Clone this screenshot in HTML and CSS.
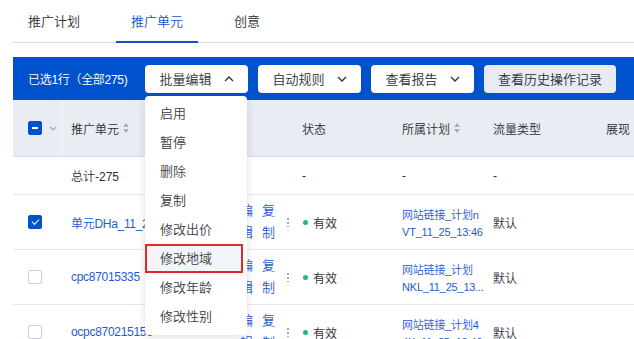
FILE: index.html
```html
<!DOCTYPE html>
<html lang="zh-CN">
<head>
  <meta charset="UTF-8">
  <meta name="viewport" content="width=device-width, initial-scale=1.0">
  <title>推广单元</title>
  <link rel="stylesheet" href="styles.css">
</head>
<body>
  <div class="page">
    <nav class="tabs">
      <a class="tab">推广计划</a>
      <a class="tab active">推广单元</a>
      <a class="tab">创意</a>
    </nav>

    <div class="batch-bar">
      <span class="selected">已选1行（全部275)</span>
      <div class="batch-btns">
        <button class="btn open">批量编辑
          <svg class="chev" viewBox="0 0 10 6"><path d="M1 5 L5 1 L9 5" /></svg>
        </button>
        <button class="btn">自动规则
          <svg class="chev" viewBox="0 0 10 6"><path d="M1 1 L5 5 L9 1" /></svg>
        </button>
        <button class="btn">查看报告
          <svg class="chev" viewBox="0 0 10 6"><path d="M1 1 L5 5 L9 1" /></svg>
        </button>
        <button class="btn gray">查看历史操作记录</button>
      </div>

      <ul class="dropdown">
        <li>启用</li>
        <li>暂停</li>
        <li>删除</li>
        <li>复制</li>
        <li>修改出价</li>
        <li class="marked">修改地域</li>
        <li>修改年龄</li>
        <li>修改性别</li>
      </ul>
    </div>

    <div class="table">
      <div class="row head">
        <div class="cell check">
          <span class="cb partial"></span>
          <svg class="cb-arrow" viewBox="0 0 8 5"><path d="M1 1 L4 4 L7 1" /></svg>
        </div>
        <div class="cell name">推广单元 <span class="sort"></span></div>
        <div class="cell"></div>
        <div class="cell">状态</div>
        <div class="cell">所属计划 <span class="sort"></span></div>
        <div class="cell">流量类型</div>
        <div class="cell">展现 <span class="sort"></span></div>
      </div>

      <div class="row total">
        <div class="cell check"></div>
        <div class="cell name">总计-275</div>
        <div class="cell"></div>
        <div class="cell">-</div>
        <div class="cell">-</div>
        <div class="cell">-</div>
        <div class="cell"></div>
      </div>

      <div class="row">
        <div class="cell check"><span class="cb checked"></span></div>
        <div class="cell name link">单元DHa_11_25_13:46</div>
        <div class="cell ops"><span class="op">编辑</span><span class="op">复制</span><span class="more"></span></div>
        <div class="cell"><span class="dot"></span>有效</div>
        <div class="cell plan">网站链接_计划n<br>VT_11_25_13:46</div>
        <div class="cell">默认</div>
        <div class="cell"></div>
      </div>

      <div class="row">
        <div class="cell check"><span class="cb"></span></div>
        <div class="cell name link">cpc87015335</div>
        <div class="cell ops"><span class="op">编辑</span><span class="op">复制</span><span class="more"></span></div>
        <div class="cell"><span class="dot"></span>有效</div>
        <div class="cell plan">网站链接_计划<br>NKL_11_25_13...</div>
        <div class="cell">默认</div>
        <div class="cell"></div>
      </div>

      <div class="row">
        <div class="cell check"><span class="cb"></span></div>
        <div class="cell name link">ocpc870215156</div>
        <div class="cell ops"><span class="op">编辑</span><span class="op">复制</span><span class="more"></span></div>
        <div class="cell"><span class="dot"></span>有效</div>
        <div class="cell plan">网站链接_计划4<br>4K_11_25_13:46</div>
        <div class="cell">默认</div>
        <div class="cell"></div>
      </div>
    </div>
  </div>
</body>
</html>
```

FILE: styles.css
```css
body {
  margin: 0;
  font-family: "Liberation Sans", "Noto Sans CJK SC", sans-serif;
  font-size: 12px;
  font-weight: 350;
  color: #2b2f36;
  background: #fff;
  overflow: hidden;
}
.page {
  padding-left: 13px;
}
.tabs {
  display: flex;
  gap: 21px;
  height: 42px;
  border-bottom: 1px solid #d5d9e3;
}
.tab {
  display: flex;
  align-items: center;
  padding: 0 15px;
  font-size: 13px;
  color: #2b2f36;
  border-bottom: 2px solid transparent;
  margin-bottom: -1px;
}
.tab.active {
  color: #1550c8;
  border-bottom-color: #1550c8;
}
.batch-bar {
  position: relative;
  margin-top: 14px;
  height: 43px;
  background: #0052cc;
  display: flex;
  align-items: center;
  padding-left: 15px;
}
.selected {
  color: #fff;
  width: 117px;
  white-space: nowrap;
  letter-spacing: -0.3px;
}
.batch-btns {
  display: flex;
  gap: 10px;
}
.btn {
  height: 28px;
  width: 103px;
  border: none;
  border-radius: 4px;
  background: #fff;
  font-family: inherit;
  font-weight: inherit;
  font-size: 13px;
  color: #2b2f36;
  display: flex;
  align-items: center;
  justify-content: center;
  gap: 12px;
  padding: 0;
}
.btn.gray {
  width: 132px;
  background: #e8ebf2;
}
.chev {
  width: 10px;
  height: 6px;
  fill: none;
  stroke: #2b2f36;
  stroke-width: 1.3;
}
.dropdown {
  position: absolute;
  left: 132px;
  top: 39px;
  width: 102px;
  margin: 0;
  padding: 3px 0 4px;
  list-style: none;
  background: #fff;
  border-radius: 4px;
  box-shadow: 0 2px 8px rgba(30, 40, 70, 0.15);
  z-index: 5;
  font-size: 13px;
}
.dropdown li {
  height: 29px;
  line-height: 29px;
  padding-left: 15px;
  color: #3a3e45;
}
.dropdown li.marked {
  background: #f3f4f8;
  outline: 2px solid #e0282e;
  outline-offset: -2px;
  margin-right: 4px;
}
.table {
  width: 700px;
}
.row {
  display: grid;
  grid-template-columns: 50px 165px 62px 100px 91px 113px 1fr;
  height: 55px;
  border-bottom: 1px solid #e6e8ee;
  box-sizing: border-box;
}
.row.head {
  height: 57px;
  background: #e9ecf3;
  border-bottom: 1px solid #d9dde6;
}
.row.total {
  height: 38px;
}
.cell {
  display: flex;
  align-items: center;
  padding-left: 12px;
  white-space: nowrap;
  overflow: hidden;
}
.cell.check {
  padding-left: 15px;
  gap: 7px;
  border-right: 1px solid #fff;
}
.head .cell.check {
  border-right-color: #f4f6fa;
}
.cell.name {
  padding-left: 8px;
}
.link,
.plan {
  color: #1f5ad6;
}
.link {
  letter-spacing: -0.3px;
}
.plan {
  display: block;
  padding-top: 12px;
  line-height: 17px;
  font-size: 11px;
  letter-spacing: -0.2px;
  overflow: visible;
}
.cb {
  width: 14px;
  height: 14px;
  border: 1px solid #c9ced9;
  border-radius: 2px;
  box-sizing: border-box;
  background: #fff;
  position: relative;
}
.cb.partial,
.cb.checked {
  background: #0052cc;
  border-color: #0052cc;
}
.cb.partial::after {
  content: "";
  position: absolute;
  left: 3px;
  top: 5px;
  width: 6px;
  height: 2px;
  background: #fff;
}
.cb.checked::after {
  content: "";
  position: absolute;
  left: 3px;
  top: 3px;
  width: 6px;
  height: 3px;
  border-left: 1.5px solid #fff;
  border-bottom: 1.5px solid #fff;
  transform: rotate(-45deg);
}
.cb-arrow {
  width: 8px;
  height: 5px;
  fill: none;
  stroke: #a3a9b6;
  stroke-width: 1.2;
}
.sort {
  display: inline-flex;
  flex-direction: column;
  gap: 2px;
  margin-left: 4px;
}
.sort::before,
.sort::after {
  content: "";
  border-left: 3.5px solid transparent;
  border-right: 3.5px solid transparent;
}
.sort::before {
  border-bottom: 4px solid #a8aebb;
}
.sort::after {
  border-top: 4px solid #a8aebb;
}
.ops {
  gap: 9px;
}
.op {
  width: 13px;
  white-space: normal;
  line-height: 22px;
  font-size: 13px;
  color: #1f5ad6;
}
.more {
  width: 2px;
  height: 10px;
  margin-left: 3px;
  background: radial-gradient(circle, #a3a9b6 0.9px, transparent 1px) 0 0 / 2px 4px repeat-y;
}
.dot {
  width: 5px;
  height: 5px;
  border-radius: 50%;
  background: #14c36b;
  margin-left: 1px;
  margin-right: 5px;
}
```
